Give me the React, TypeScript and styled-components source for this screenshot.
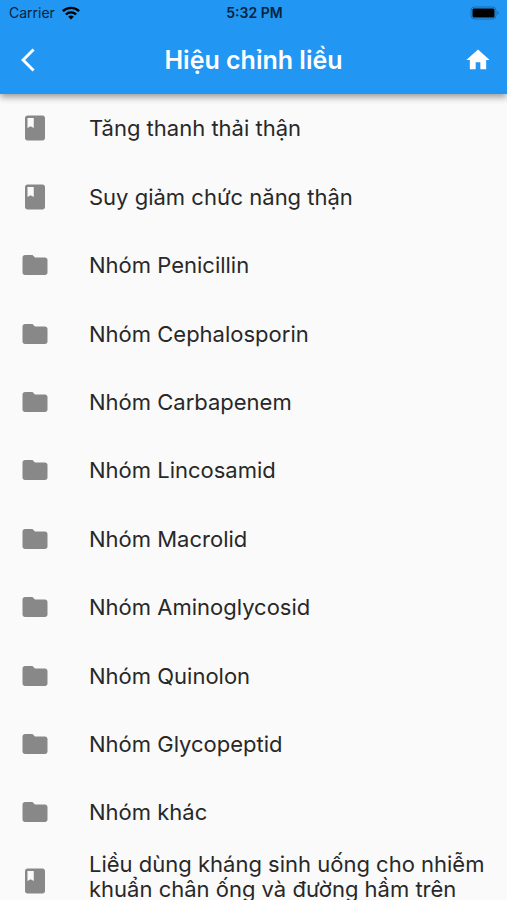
import React from 'react';
import styled, { createGlobalStyle } from 'styled-components';
import { MdBook, MdFolder, MdHome, MdArrowBackIos } from 'react-icons/md';

const GlobalStyle = createGlobalStyle`
  * { box-sizing: border-box; }
  html { scrollbar-width: none; }
  body {
    margin: 0;
    background: #fafafa;
    font-family: Inter, 'Noto Sans', sans-serif;
  }
`;

const Header = styled.header`
  position: sticky;
  top: 0;
  z-index: 1;
  background: #2196f3;
  box-shadow: 0 3px 7px rgba(0, 0, 0, 0.4);
`;

const StatusBar = styled.div`
  display: grid;
  grid-template-columns: 1fr auto 1fr;
  align-items: center;
  height: 26px;
  padding: 0 7px 0 9px;
  font-size: 14px;
  line-height: 18px;
  color: #06233c;
`;

const Carrier = styled.div`
  display: flex;
  align-items: center;
  gap: 7px;
`;

const Clock = styled.time`
  font-weight: 600;
`;

const BatteryIcon = styled.svg`
  justify-self: end;
`;

const NavBar = styled.nav`
  display: grid;
  grid-template-columns: 64px 1fr 64px;
  align-items: center;
  height: 68px;
`;

const NavButton = styled.button<{ $side: 'start' | 'end' }>`
  display: flex;
  align-items: center;
  justify-content: ${({ $side }) => ($side === 'start' ? 'flex-start' : 'flex-end')};
  height: 56px;
  padding: ${({ $side }) => ($side === 'start' ? '0 0 0 21px' : '0 15px 0 0')};
  border: 0;
  background: none;
  color: #fff;
  cursor: pointer;

  svg { flex: none; }
`;

const Title = styled.h1`
  margin: 0;
  font-size: 25px;
  line-height: 32px;
  font-weight: 600;
  text-align: center;
  color: #fff;
`;

const List = styled.ul`
  margin: 0;
  padding: 0;
  list-style: none;
`;

const ListItem = styled.li`
  &:nth-child(5n + 1),
  &:nth-child(5n + 3) {
    margin-bottom: 1px;
  }
  &:last-child {
    margin-bottom: 0;
  }
`;

const Row = styled.button<{ $multiline?: boolean }>`
  display: flex;
  align-items: ${({ $multiline }) => ($multiline ? 'flex-start' : 'center')};
  gap: 39px;
  width: 100%;
  min-height: 68px;
  padding: ${({ $multiline }) => ($multiline ? '5px 20px' : '8px 20px')};
  border: 0;
  background: none;
  font: inherit;
  font-size: 22px;
  line-height: 25px;
  text-align: left;
  color: #282828;
  cursor: pointer;

  svg {
    flex: none;
    margin-top: ${({ $multiline }) => ($multiline ? '14px' : '0')};
    color: #888;
  }
`;

type Item = { label: string; kind: 'book' | 'folder'; multiline?: boolean };

const items: Item[] = [
  { label: 'Tăng thanh thải thận', kind: 'book' },
  { label: 'Suy giảm chức năng thận', kind: 'book' },
  { label: 'Nhóm Penicillin', kind: 'folder' },
  { label: 'Nhóm Cephalosporin', kind: 'folder' },
  { label: 'Nhóm Carbapenem', kind: 'folder' },
  { label: 'Nhóm Lincosamid', kind: 'folder' },
  { label: 'Nhóm Macrolid', kind: 'folder' },
  { label: 'Nhóm Aminoglycosid', kind: 'folder' },
  { label: 'Nhóm Quinolon', kind: 'folder' },
  { label: 'Nhóm Glycopeptid', kind: 'folder' },
  { label: 'Nhóm khác', kind: 'folder' },
  {
    label: 'Liều dùng kháng sinh uống cho nhiễm khuẩn chân ống và đường hầm trên',
    kind: 'book',
    multiline: true,
  },
];

export default function App() {
  return (
    <>
      <GlobalStyle />
      <Header>
        <StatusBar>
          <Carrier>
            <span>Carrier</span>
            <svg width="18" height="14" viewBox="0 0 18 14" fill="none" stroke="#000" strokeWidth="2.4" role="img" aria-label="Wi-Fi">
              <path d="M0.9 5.2a11.5 11.5 0 0 1 16.2 0M3.9 8.5a7.2 7.2 0 0 1 10.2 0" />
              <path d="M9 13.6 6.2 10.8a4 4 0 0 1 5.6 0Z" fill="#000" stroke="none" />
            </svg>
          </Carrier>
          <Clock>5:32 PM</Clock>
          <BatteryIcon width="30" height="14" viewBox="0 0 30 14" role="img" aria-label="Battery">
            <rect x="1" y="1" width="25" height="12" rx="3.5" fill="none" stroke="#186bae" />
            <rect x="2.5" y="2.5" width="22" height="9" rx="1.5" fill="#000" />
            <path d="M27.5 5a2.2 2.2 0 0 1 0 4Z" fill="#186bae" />
          </BatteryIcon>
        </StatusBar>
        <NavBar>
          <NavButton $side="start" aria-label="Back"><MdArrowBackIos size={28} /></NavButton>
          <Title>Hiệu chỉnh liều</Title>
          <NavButton $side="end" aria-label="Home"><MdHome size={28} /></NavButton>
        </NavBar>
      </Header>
      <List>
        {items.map(({ label, kind, multiline }) => (
          <ListItem key={label}>
            <Row $multiline={multiline}>
              {kind === 'book' ? <MdBook size={30} /> : <MdFolder size={30} />}
              <span>{label}</span>
            </Row>
          </ListItem>
        ))}
      </List>
    </>
  );
}
